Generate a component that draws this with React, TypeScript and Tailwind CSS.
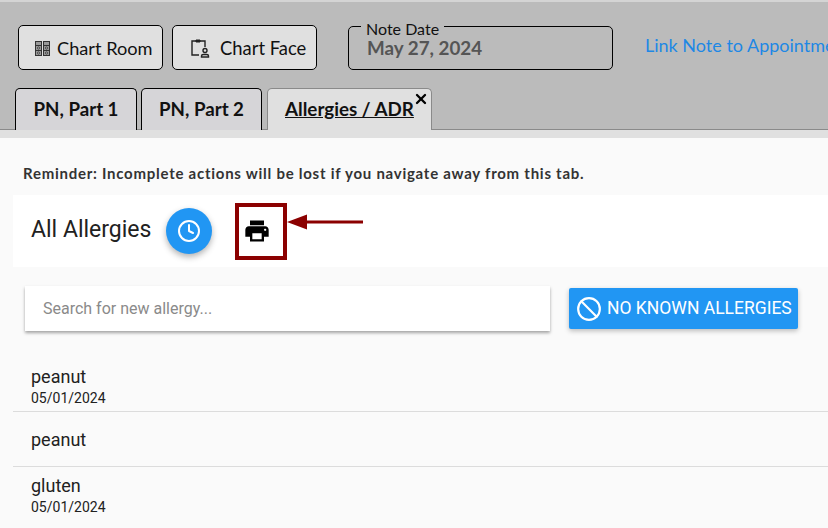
import { Ban, Clock, X } from 'lucide-react'

const allergies = [
  { name: 'peanut', date: '05/01/2024', rowClass: 'h-[58px] pt-[13px] border-b border-[#dcdcdc]' },
  { name: 'peanut', date: '', rowClass: 'h-[55px] pt-[18px] border-b border-[#dcdcdc]' },
  { name: 'gluten', date: '05/01/2024', rowClass: 'h-[61px] pt-[9px]' },
]

function ChartRoomIcon() {
  return (
    <svg className="shrink-0" width="15" height="17" viewBox="0 0 15 17" fill="none" stroke="#333" strokeWidth="1">
      <rect x="0.5" y="1.5" width="6" height="14" fill="#999" />
      <rect x="8.5" y="1.5" width="6" height="14" fill="#999" />
      <path d="M1 5.5h5M9 5.5h5M1 10.5h5M9 10.5h5" />
      <circle cx="3.5" cy="8" r="1" fill="#fff" />
      <circle cx="11.5" cy="8" r="1" fill="#fff" />
      <circle cx="3.5" cy="13" r="1" fill="#fff" />
      <circle cx="11.5" cy="13" r="1" fill="#fff" />
    </svg>
  )
}

function ChartFaceIcon() {
  return (
    <svg className="shrink-0" width="19" height="19" viewBox="0 0 19 19" fill="none" stroke="#222" strokeWidth="1.4">
      <path d="M8 16H1V2h4M9 2h5v6" />
      <path d="M5 1h4v2H5z" fill="#222" strokeWidth="1" />
      <circle cx="14" cy="11.500" r="2" />
      <path d="M10.500 18v-1c0-1 .8-1.500 1.800-1.500h3.400c1 0 1.800.5 1.800 1.500v1z" />
    </svg>
  )
}

function PrintIcon() {
  return (
    <svg width="28" height="28" viewBox="0 0 24 24" fill="#000">
      <path d="M19 8H5c-1.660 0-3 1.340-3 3v6h4v4h12v-4h4v-6c0-1.660-1.340-3-3-3zm-3 11H8v-5h8v5zm3-7c-.550 0-1-.450-1-1s.450-1 1-1 1 .450 1 1-.450 1-1 1zm-1-9H6v4h12V3z" />
    </svg>
  )
}

export default function App() {
  return (
    <div className="h-[528px] w-[828px] overflow-hidden bg-[#fafafa] font-['Lato',sans-serif] text-black">
      {/* Header */}
      <div className="h-[130px] border-t-2 border-[#d4d4d4] bg-[#bbbbbb]">
        <div className="flex h-[86px] items-start pl-[18px] pt-[23px]">
          <button className="flex h-[45px] w-[145px] shrink-0 items-center gap-[7px] rounded-[5px] border border-black bg-[#e0e0e0] pl-[16px] pt-[2px] text-[18.2px] text-[#111]">
            <ChartRoomIcon />
            Chart Room
          </button>
          <button className="ml-[9px] flex h-[45px] w-[145px] shrink-0 items-center gap-[10px] rounded-[5px] border border-black bg-[#e0e0e0] pl-[18px] pt-[2px] text-[18.4px] text-[#111]">
            <ChartFaceIcon />
            Chart Face
          </button>
          <fieldset className="ml-[31px] -mt-[10px] h-[55px] w-[265px] shrink-0 rounded-[5px] border border-black pl-[12px]">
            <legend className="px-[5px] pt-[6px] text-[16px] leading-[16px] text-[#111]">Note Date</legend>
            <div className="pl-[6px] text-[18.8px] leading-[22px] font-bold text-[#555]">May 27, 2024</div>
          </fieldset>
          <a className="ml-[32px] -mt-[2px] whitespace-nowrap text-[18px] leading-[44px] text-[#1e88e5]">
            Link Note to Appointment
          </a>
        </div>
        <div className="flex h-[42px] items-start border-b border-[#8a8a8a] pl-[15px]">
          <div className="flex h-[42px] w-[122px] items-center justify-center rounded-t-[5px] border border-b-0 border-black bg-[#d6d5d8] text-[18.7px] font-bold text-[#111]">
            PN, Part 1
          </div>
          <div className="ml-[4px] flex h-[42px] w-[121px] items-center justify-center rounded-t-[5px] border border-b-0 border-black bg-[#d6d5d8] text-[18.7px] font-bold text-[#111]">
            PN, Part 2
          </div>
          <div className="relative ml-[5px] flex h-[42px] w-[165px] items-center rounded-t-[5px] border border-b-0 border-[#8a8a8a] bg-[#e0e0e0] pl-[17px] text-[18.8px] font-bold text-[#111] underline">
            Allergies / ADR
            <X className="absolute right-[2px] top-[2px] h-[16px] w-[16px] text-black" strokeWidth={3.5} />
          </div>
        </div>
      </div>

      <div className="h-[8px] bg-[#e0e0e0]" />

      {/* Content */}
      <div className="pl-[13px]">
        <p className="pl-[10px] pt-[27px] text-[15px] leading-[17px] font-bold tracking-[0.74px] whitespace-nowrap text-[#333]">
          Reminder: Incomplete actions will be lost if you navigate away from this tab.
        </p>

        <div className="relative mt-[13px] flex h-[72px] items-center bg-white pl-[18px] font-['Roboto',sans-serif]">
          <h2 className="-mt-[1px] w-[120px] text-[23px] whitespace-nowrap text-[#212121]">All Allergies</h2>
          <div className="ml-[15px] flex h-[46px] w-[46px] items-center justify-center rounded-full bg-[#2196f3] shadow-[0_3px_6px_rgba(0,0,0,0.3)]">
            <Clock className="h-[24px] w-[24px] text-white" strokeWidth={2} />
          </div>
          <div className="ml-[23px] flex h-[57px] w-[52px] items-center justify-start border-[4px] border-[#8b0000] pl-[4px]">
            <PrintIcon />
          </div>
          <svg className="absolute left-[274px] top-[15px]" width="80" height="24" viewBox="0 0 80 24">
            <path d="M0 12 L20 4.500 V10.500 H76 V13.500 H20 V19.500 Z" fill="#8b0000" />
          </svg>
        </div>

        <div className="mt-[19px] flex items-center pl-[12px] font-['Roboto',sans-serif]">
          <div className="flex h-[45px] w-[525px] items-center bg-white pl-[18px] text-[16px] text-[#8a8a8a] shadow-[0_2px_3px_rgba(0,0,0,0.35)]">
            Search for new allergy...
          </div>
          <button className="ml-[19px] flex h-[41px] w-[229px] items-center gap-[5px] rounded-[2px] bg-[#2196f3] pl-[7px] text-[17.5px] whitespace-nowrap text-white shadow-[0_2px_5px_rgba(0,0,0,0.25)]">
            <Ban className="h-[26px] w-[26px] shrink-0" strokeWidth={2} />
            NO KNOWN ALLERGIES
          </button>
        </div>

        <div className="mt-[23px] font-['Roboto',sans-serif]">
          {allergies.map((item, i) => (
            <div key={i} className={`${item.rowClass} pl-[18px]`}>
              <div className="text-[18px] leading-[20px] text-[#212121]">{item.name}</div>
              {item.date && <div className="mt-[3px] text-[14px] leading-[16px] text-[#212121]">{item.date}</div>}
            </div>
          ))}
        </div>
      </div>
    </div>
  )
}
